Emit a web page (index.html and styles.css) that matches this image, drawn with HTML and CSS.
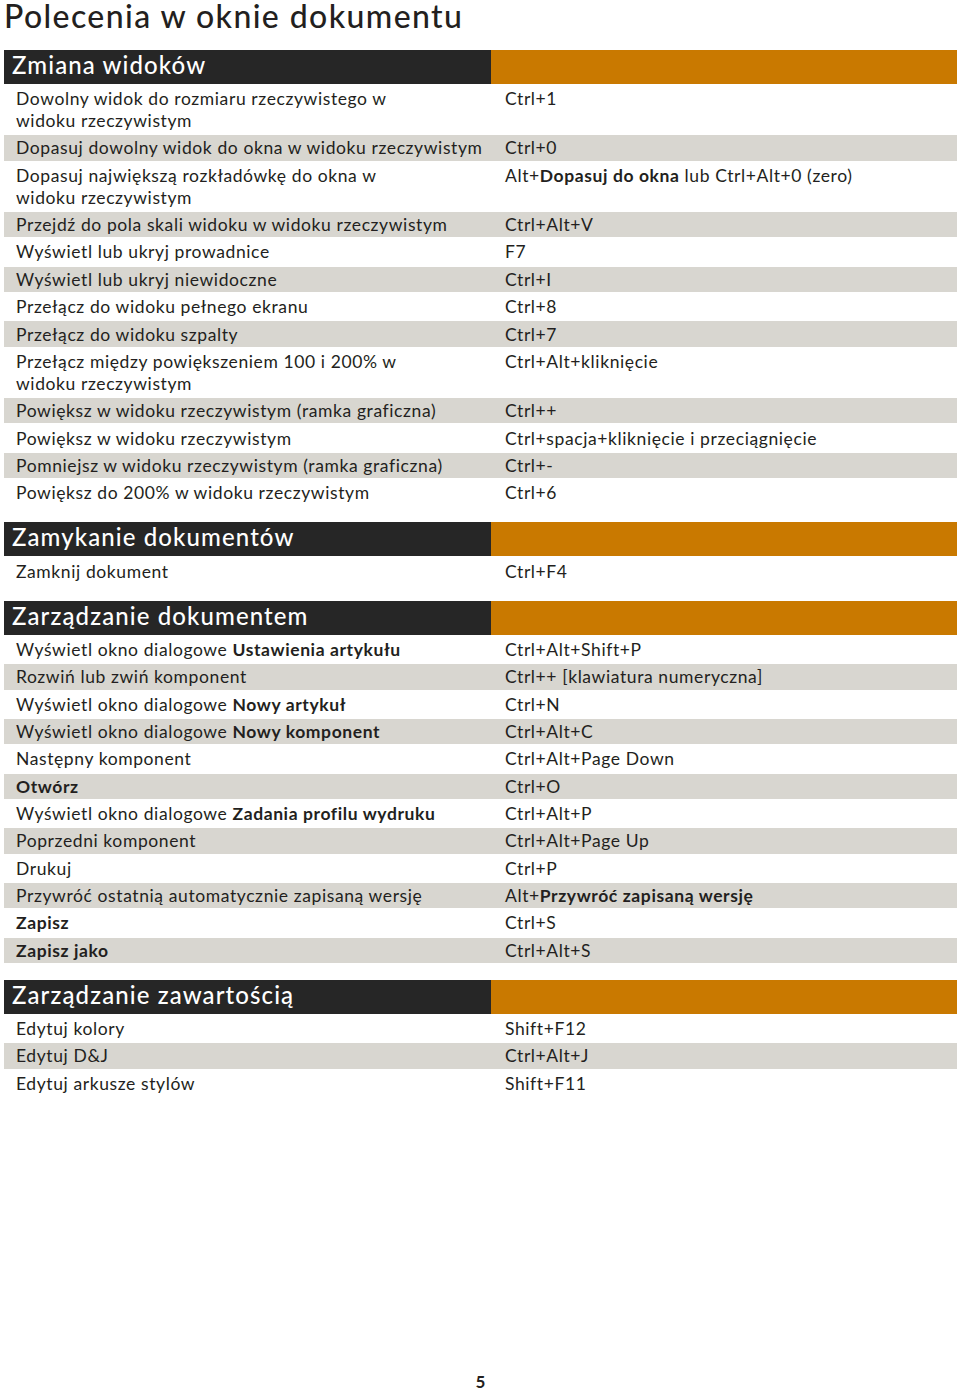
FILE: index.html
```html
<!DOCTYPE html>
<html lang="pl">
<head>
<meta charset="utf-8">
<title>Polecenia w oknie dokumentu</title>
<link rel="stylesheet" href="styles.css">
</head>
<body>
<div class="page">
  <h1 class="title">Polecenia w oknie dokumentu</h1>

  <section class="sec">
    <div class="sec-head"><h2 class="sec-name">Zmiana widoków</h2><div class="sec-accent"></div></div>
    <div class="row"><div class="cmd">Dowolny widok do rozmiaru rzeczywistego w<br>widoku rzeczywistym</div><div class="key">Ctrl+1</div></div>
    <div class="row"><div class="cmd">Dopasuj dowolny widok do okna w widoku rzeczywistym</div><div class="key">Ctrl+0</div></div>
    <div class="row"><div class="cmd">Dopasuj największą rozkładówkę do okna w<br>widoku rzeczywistym</div><div class="key">Alt+<b>Dopasuj do okna</b> lub Ctrl+Alt+0 (zero)</div></div>
    <div class="row"><div class="cmd">Przejdź do pola skali widoku w widoku rzeczywistym</div><div class="key">Ctrl+Alt+V</div></div>
    <div class="row"><div class="cmd">Wyświetl lub ukryj prowadnice</div><div class="key">F7</div></div>
    <div class="row"><div class="cmd">Wyświetl lub ukryj niewidoczne</div><div class="key">Ctrl+I</div></div>
    <div class="row"><div class="cmd">Przełącz do widoku pełnego ekranu</div><div class="key">Ctrl+8</div></div>
    <div class="row"><div class="cmd">Przełącz do widoku szpalty</div><div class="key">Ctrl+7</div></div>
    <div class="row"><div class="cmd">Przełącz między powiększeniem 100 i 200% w<br>widoku rzeczywistym</div><div class="key">Ctrl+Alt+kliknięcie</div></div>
    <div class="row"><div class="cmd">Powiększ w widoku rzeczywistym (ramka graficzna)</div><div class="key">Ctrl++</div></div>
    <div class="row"><div class="cmd">Powiększ w widoku rzeczywistym</div><div class="key">Ctrl+spacja+kliknięcie i przeciągnięcie</div></div>
    <div class="row"><div class="cmd">Pomniejsz w widoku rzeczywistym (ramka graficzna)</div><div class="key">Ctrl+-</div></div>
    <div class="row"><div class="cmd">Powiększ do 200% w widoku rzeczywistym</div><div class="key">Ctrl+6</div></div>
  </section>

  <section class="sec">
    <div class="sec-head"><h2 class="sec-name">Zamykanie dokumentów</h2><div class="sec-accent"></div></div>
    <div class="row"><div class="cmd">Zamknij dokument</div><div class="key">Ctrl+F4</div></div>
  </section>

  <section class="sec">
    <div class="sec-head"><h2 class="sec-name">Zarządzanie dokumentem</h2><div class="sec-accent"></div></div>
    <div class="row"><div class="cmd">Wyświetl okno dialogowe <b>Ustawienia artykułu</b></div><div class="key">Ctrl+Alt+Shift+P</div></div>
    <div class="row"><div class="cmd">Rozwiń lub zwiń komponent</div><div class="key">Ctrl++ [klawiatura numeryczna]</div></div>
    <div class="row"><div class="cmd">Wyświetl okno dialogowe <b>Nowy artykuł</b></div><div class="key">Ctrl+N</div></div>
    <div class="row"><div class="cmd">Wyświetl okno dialogowe <b>Nowy komponent</b></div><div class="key">Ctrl+Alt+C</div></div>
    <div class="row"><div class="cmd">Następny komponent</div><div class="key">Ctrl+Alt+Page Down</div></div>
    <div class="row"><div class="cmd"><b>Otwórz</b></div><div class="key">Ctrl+O</div></div>
    <div class="row"><div class="cmd">Wyświetl okno dialogowe <b>Zadania profilu wydruku</b></div><div class="key">Ctrl+Alt+P</div></div>
    <div class="row"><div class="cmd">Poprzedni komponent</div><div class="key">Ctrl+Alt+Page Up</div></div>
    <div class="row"><div class="cmd">Drukuj</div><div class="key">Ctrl+P</div></div>
    <div class="row"><div class="cmd">Przywróć ostatnią automatycznie zapisaną wersję</div><div class="key">Alt+<b>Przywróć zapisaną wersję</b></div></div>
    <div class="row"><div class="cmd"><b>Zapisz</b></div><div class="key">Ctrl+S</div></div>
    <div class="row"><div class="cmd"><b>Zapisz jako</b></div><div class="key">Ctrl+Alt+S</div></div>
  </section>

  <section class="sec">
    <div class="sec-head"><h2 class="sec-name">Zarządzanie zawartością</h2><div class="sec-accent"></div></div>
    <div class="row"><div class="cmd">Edytuj kolory</div><div class="key">Shift+F12</div></div>
    <div class="row"><div class="cmd">Edytuj D&amp;J</div><div class="key">Ctrl+Alt+J</div></div>
    <div class="row"><div class="cmd">Edytuj arkusze stylów</div><div class="key">Shift+F11</div></div>
  </section>

  <footer class="folio">5</footer>
</div>
</body>
</html>
```

FILE: styles.css
```css
html, body {
  margin: 0;
  padding: 0;
  background: #ffffff;
}

.page {
  box-sizing: border-box;
  min-height: 1393px;
  padding: 0 3px 0 4px;
  display: flex;
  flex-direction: column;
  font-family: Lato, "Noto Sans", sans-serif;
  color: #231f20;
}

.title {
  margin: 0;
  height: 50px;
  font-size: 32px;
  line-height: 32px;
  font-weight: 500;
  letter-spacing: 1.4px;
  white-space: nowrap;
}

.sec + .sec {
  margin-top: 17px;
}

.sec-head {
  display: grid;
  grid-template-columns: 487px 1fr;
  height: 34px;
}

.sec-name {
  margin: 0;
  background: #262626;
  color: #ffffff;
  font-size: 24px;
  font-weight: 500;
  line-height: 30px;
  padding-left: 8px;
  letter-spacing: 1.1px;
  white-space: nowrap;
}

.sec-accent {
  background: #c97900;
}

.row {
  display: grid;
  grid-template-columns: 487px 1fr;
  margin-top: 2px;
  padding: 2.1px 0 1.25px;
  font-size: 17.5px;
  line-height: 22px;
  letter-spacing: 0.6px;
}

.row:nth-of-type(odd) {
  background: #d8d6d0;
}

.row .cmd {
  padding-left: 12px;
}

.row .key {
  padding-left: 14px;
}

.row b {
  font-weight: 700;
  letter-spacing: 0.6px;
}

.folio {
  margin-top: auto;
  text-align: center;
  font-size: 17px;
  font-weight: 700;
  line-height: 20px;
  padding: 0 0 1px 0;
}
```
